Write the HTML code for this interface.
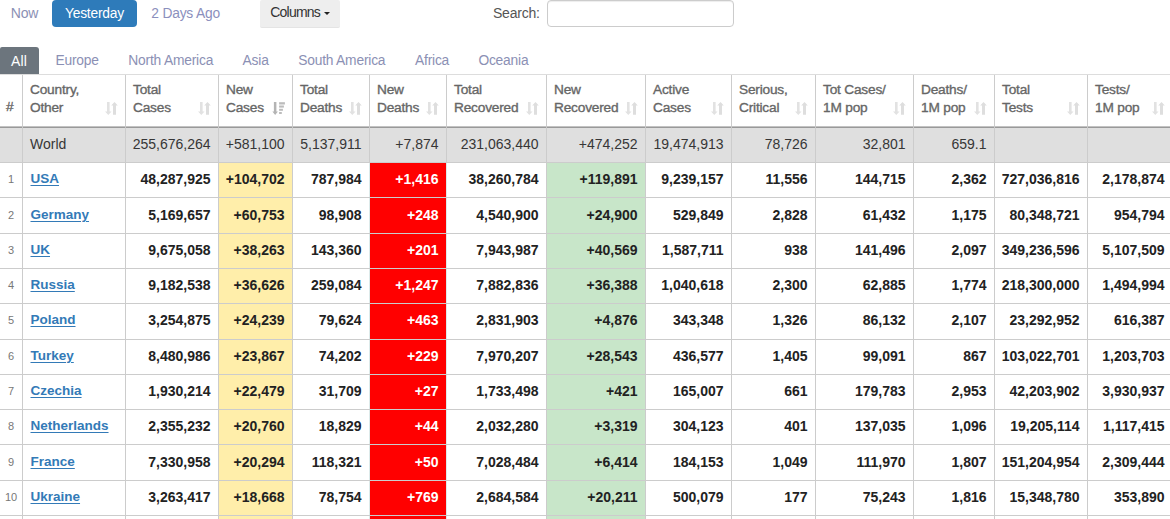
<!DOCTYPE html>
<html><head><meta charset="utf-8"><title>COVID table</title>
<style>
*{margin:0;padding:0;box-sizing:border-box}
html,body{width:1170px;height:519px;overflow:hidden;background:#fff}
body{position:relative;font-family:"Liberation Sans",sans-serif;color:#333}
.a{position:absolute;white-space:nowrap}
.t{position:absolute;white-space:nowrap;line-height:20px;height:20px}
.bg{position:absolute}
.hl{position:absolute;height:1px}
.vl{position:absolute;width:1px}
.hd{position:absolute;font-weight:normal;color:#666;-webkit-text-stroke:0.35px #666;font-size:13.7px;letter-spacing:-0.2px;line-height:18px;white-space:nowrap}
.num{position:absolute;text-align:right;font-weight:bold;font-size:14px;color:#222;line-height:20px;white-space:nowrap}
.wn{position:absolute;text-align:right;font-size:14px;color:#363636;line-height:20px;white-space:nowrap}
.cn{position:absolute;font-weight:bold;font-size:13.5px;color:#337ab7;text-decoration:underline;text-underline-offset:2px;line-height:20px;white-space:nowrap}
.rk{position:absolute;text-align:center;font-size:11px;color:#777;line-height:20px;white-space:nowrap}
.tab{position:absolute;font-size:13.8px;letter-spacing:-0.2px;color:#8b90b4;line-height:20px;white-space:nowrap}
.si{position:absolute}
</style></head><body>

<div class="a" style="left:10.8px;top:2.6px;font-size:14px;letter-spacing:-0.25px;line-height:20px;color:#8b90b4">Now</div>
<div class="a" style="left:52px;top:0;width:85px;height:27px;background:#2e7bba;border-radius:4px"></div>
<div class="a" style="left:65px;top:4px;font-size:13.8px;letter-spacing:-0.22px;line-height:20px;color:#fff">Yesterday</div>
<div class="a" style="left:151.3px;top:4px;font-size:13.8px;letter-spacing:-0.2px;line-height:20px;color:#8b8fbd">2 Days Ago</div>
<div class="a" style="left:260px;top:0;width:80px;height:28px;background:#eee;border-bottom:1px solid #e4e4e4;border-radius:2px"></div>
<div class="a" style="left:270.3px;top:2px;font-size:14px;letter-spacing:-0.8px;line-height:20px;color:#333">Columns</div>
<div class="a" style="left:323.6px;top:12px;width:0;height:0;border-left:3.4px solid transparent;border-right:3.4px solid transparent;border-top:3.5px solid #222"></div>
<div class="a" style="left:493px;top:2.5px;font-size:14px;letter-spacing:-0.22px;line-height:20px;color:#555">Search:</div>
<div class="a" style="left:547px;top:0;width:187px;height:27px;border:1px solid #ccc;border-radius:4px;box-shadow:inset 0 1px 1px rgba(0,0,0,.075)"></div>
<div class="a" style="left:0;top:47px;width:39px;height:27px;background:#6c757d;border-radius:2px 3px 0 0"></div>
<div class="tab" style="left:11px;top:51px;color:#fff;font-size:14px;letter-spacing:0.2px">All</div>
<div class="tab" style="left:55.5px;top:50.5px">Europe</div>
<div class="tab" style="left:128.3px;top:50.5px">North America</div>
<div class="tab" style="left:242.6px;top:50.5px">Asia</div>
<div class="tab" style="left:298.2px;top:50.5px">South America</div>
<div class="tab" style="left:415px;top:50.5px">Africa</div>
<div class="tab" style="left:478.4px;top:50.5px">Oceania</div>
<div class="bg" style="left:0;top:128px;width:1170px;height:34px;background:#dfdfdf"></div>
<div class="bg" style="left:219px;top:163px;width:73px;height:356px;background:#ffeeaa"></div>
<div class="bg" style="left:370px;top:163px;width:76px;height:356px;background:#ff0000"></div>
<div class="bg" style="left:547px;top:163px;width:98px;height:356px;background:#c8e6c9"></div>
<div class="vl" style="left:22px;top:75px;height:444px;background:#ccc"></div>
<div class="vl" style="left:125px;top:75px;height:444px;background:#ccc"></div>
<div class="vl" style="left:218px;top:75px;height:444px;background:#ccc"></div>
<div class="vl" style="left:292px;top:75px;height:444px;background:#ccc"></div>
<div class="vl" style="left:369px;top:75px;height:51px;background:#ccc"></div>
<div class="vl" style="left:369px;top:128px;height:34px;background:#ccc"></div>
<div class="vl" style="left:369px;top:163px;height:356px;background:#dceaea"></div>
<div class="vl" style="left:446px;top:75px;height:51px;background:#ccc"></div>
<div class="vl" style="left:446px;top:128px;height:34px;background:#ccc"></div>
<div class="vl" style="left:446px;top:163px;height:356px;background:#dceaea"></div>
<div class="vl" style="left:546px;top:75px;height:444px;background:#ccc"></div>
<div class="vl" style="left:645px;top:75px;height:444px;background:#ccc"></div>
<div class="vl" style="left:731px;top:75px;height:444px;background:#ccc"></div>
<div class="vl" style="left:815px;top:75px;height:444px;background:#ccc"></div>
<div class="vl" style="left:913px;top:75px;height:444px;background:#ccc"></div>
<div class="vl" style="left:994px;top:75px;height:444px;background:#ccc"></div>
<div class="vl" style="left:1087px;top:75px;height:444px;background:#ccc"></div>
<div class="hl" style="left:0;top:74px;width:1170px;background:#ddd"></div>
<div class="hl" style="left:0;top:126px;width:1170px;background:#c2c2c2"></div>
<div class="hl" style="left:0;top:127px;width:1170px;background:#999"></div>
<div class="hl" style="left:0;top:162px;width:1170px;background:#ccc"></div>
<div class="hl" style="left:0;top:197px;width:1170px;background:#ccc"></div>
<div class="hl" style="left:0;top:233px;width:1170px;background:#ccc"></div>
<div class="hl" style="left:0;top:268px;width:1170px;background:#ccc"></div>
<div class="hl" style="left:0;top:303px;width:1170px;background:#ccc"></div>
<div class="hl" style="left:0;top:339px;width:1170px;background:#ccc"></div>
<div class="hl" style="left:0;top:374px;width:1170px;background:#ccc"></div>
<div class="hl" style="left:0;top:409px;width:1170px;background:#ccc"></div>
<div class="hl" style="left:0;top:444px;width:1170px;background:#ccc"></div>
<div class="hl" style="left:0;top:480px;width:1170px;background:#ccc"></div>
<div class="hl" style="left:0;top:515px;width:1170px;background:#ccc"></div>
<div class="vl" style="left:22px;top:126px;height:2px;background:#c8c8c8"></div>
<div class="vl" style="left:125px;top:126px;height:2px;background:#c8c8c8"></div>
<div class="vl" style="left:218px;top:126px;height:2px;background:#c8c8c8"></div>
<div class="vl" style="left:292px;top:126px;height:2px;background:#c8c8c8"></div>
<div class="vl" style="left:369px;top:126px;height:2px;background:#c8c8c8"></div>
<div class="vl" style="left:446px;top:126px;height:2px;background:#c8c8c8"></div>
<div class="vl" style="left:546px;top:126px;height:2px;background:#c8c8c8"></div>
<div class="vl" style="left:645px;top:126px;height:2px;background:#c8c8c8"></div>
<div class="vl" style="left:731px;top:126px;height:2px;background:#c8c8c8"></div>
<div class="vl" style="left:815px;top:126px;height:2px;background:#c8c8c8"></div>
<div class="vl" style="left:913px;top:126px;height:2px;background:#c8c8c8"></div>
<div class="vl" style="left:994px;top:126px;height:2px;background:#c8c8c8"></div>
<div class="vl" style="left:1087px;top:126px;height:2px;background:#c8c8c8"></div>
<div class="hd" style="left:6px;top:98.3px;font-size:13.7px;letter-spacing:0">#</div>
<div class="hd" style="left:30px;top:80.5px">Country,<br>Other</div>
<svg class="si" style="left:105px;top:101px" width="14" height="15" viewBox="0 0 14 15"><path d="M2 1H4.6V10.4H6.5L3.3 14 0 10.4H2Z" fill="#e2e2e2"/><path d="M8 13.8H11V4.6H12.8L9.5 1 6.2 4.6H8Z" fill="#dedede"/></svg>
<div class="hd" style="left:133px;top:80.5px">Total<br>Cases</div>
<svg class="si" style="left:198px;top:101px" width="14" height="15" viewBox="0 0 14 15"><path d="M2 1H4.6V10.4H6.5L3.3 14 0 10.4H2Z" fill="#e2e2e2"/><path d="M8 13.8H11V4.6H12.8L9.5 1 6.2 4.6H8Z" fill="#dedede"/></svg>
<div class="hd" style="left:226px;top:80.5px">New<br>Cases</div>
<svg class="si" style="left:272px;top:101px" width="14" height="15" viewBox="0 0 14 15"><path d="M1.9 1H4.4V10.4H5.9L3.15 13.9 0.4 10.4H1.9Z" fill="#b4b4b4"/><rect x="7.1" y="1.2" width="5.8" height="2.3" fill="#bcbcbc"/><rect x="7.1" y="4.5" width="4.8" height="2.1" fill="#bcbcbc"/><rect x="7.1" y="7.8" width="3.8" height="2" fill="#bcbcbc"/><rect x="7.1" y="11" width="2.7" height="2" fill="#bcbcbc"/></svg>
<div class="hd" style="left:300px;top:80.5px">Total<br>Deaths</div>
<svg class="si" style="left:349px;top:101px" width="14" height="15" viewBox="0 0 14 15"><path d="M2 1H4.6V10.4H6.5L3.3 14 0 10.4H2Z" fill="#e2e2e2"/><path d="M8 13.8H11V4.6H12.8L9.5 1 6.2 4.6H8Z" fill="#dedede"/></svg>
<div class="hd" style="left:377px;top:80.5px">New<br>Deaths</div>
<svg class="si" style="left:426px;top:101px" width="14" height="15" viewBox="0 0 14 15"><path d="M2 1H4.6V10.4H6.5L3.3 14 0 10.4H2Z" fill="#e2e2e2"/><path d="M8 13.8H11V4.6H12.8L9.5 1 6.2 4.6H8Z" fill="#dedede"/></svg>
<div class="hd" style="left:454px;top:80.5px">Total<br>Recovered</div>
<svg class="si" style="left:526px;top:101px" width="14" height="15" viewBox="0 0 14 15"><path d="M2 1H4.6V10.4H6.5L3.3 14 0 10.4H2Z" fill="#e2e2e2"/><path d="M8 13.8H11V4.6H12.8L9.5 1 6.2 4.6H8Z" fill="#dedede"/></svg>
<div class="hd" style="left:554px;top:80.5px">New<br>Recovered</div>
<svg class="si" style="left:625px;top:101px" width="14" height="15" viewBox="0 0 14 15"><path d="M2 1H4.6V10.4H6.5L3.3 14 0 10.4H2Z" fill="#e2e2e2"/><path d="M8 13.8H11V4.6H12.8L9.5 1 6.2 4.6H8Z" fill="#dedede"/></svg>
<div class="hd" style="left:653px;top:80.5px">Active<br>Cases</div>
<svg class="si" style="left:711px;top:101px" width="14" height="15" viewBox="0 0 14 15"><path d="M2 1H4.6V10.4H6.5L3.3 14 0 10.4H2Z" fill="#e2e2e2"/><path d="M8 13.8H11V4.6H12.8L9.5 1 6.2 4.6H8Z" fill="#dedede"/></svg>
<div class="hd" style="left:739px;top:80.5px">Serious,<br>Critical</div>
<svg class="si" style="left:795px;top:101px" width="14" height="15" viewBox="0 0 14 15"><path d="M2 1H4.6V10.4H6.5L3.3 14 0 10.4H2Z" fill="#e2e2e2"/><path d="M8 13.8H11V4.6H12.8L9.5 1 6.2 4.6H8Z" fill="#dedede"/></svg>
<div class="hd" style="left:823px;top:80.5px">Tot Cases/<br>1M pop</div>
<svg class="si" style="left:893px;top:101px" width="14" height="15" viewBox="0 0 14 15"><path d="M2 1H4.6V10.4H6.5L3.3 14 0 10.4H2Z" fill="#e2e2e2"/><path d="M8 13.8H11V4.6H12.8L9.5 1 6.2 4.6H8Z" fill="#dedede"/></svg>
<div class="hd" style="left:921px;top:80.5px">Deaths/<br>1M pop</div>
<svg class="si" style="left:974px;top:101px" width="14" height="15" viewBox="0 0 14 15"><path d="M2 1H4.6V10.4H6.5L3.3 14 0 10.4H2Z" fill="#e2e2e2"/><path d="M8 13.8H11V4.6H12.8L9.5 1 6.2 4.6H8Z" fill="#dedede"/></svg>
<div class="hd" style="left:1002px;top:80.5px">Total<br>Tests</div>
<svg class="si" style="left:1067px;top:101px" width="14" height="15" viewBox="0 0 14 15"><path d="M2 1H4.6V10.4H6.5L3.3 14 0 10.4H2Z" fill="#e2e2e2"/><path d="M8 13.8H11V4.6H12.8L9.5 1 6.2 4.6H8Z" fill="#dedede"/></svg>
<div class="hd" style="left:1095px;top:80.5px">Tests/<br>1M pop</div>
<svg class="si" style="left:1152px;top:101px" width="14" height="15" viewBox="0 0 14 15"><path d="M2 1H4.6V10.4H6.5L3.3 14 0 10.4H2Z" fill="#e2e2e2"/><path d="M8 13.8H11V4.6H12.8L9.5 1 6.2 4.6H8Z" fill="#dedede"/></svg>
<div class="wn" style="left:30px;top:134px;text-align:left">World</div>
<div class="wn" style="left:125px;top:134px;width:85.5px">255,676,264</div>
<div class="wn" style="left:218px;top:134px;width:66.5px">+581,100</div>
<div class="wn" style="left:292px;top:134px;width:69.5px">5,137,911</div>
<div class="wn" style="left:369px;top:134px;width:69.5px">+7,874</div>
<div class="wn" style="left:446px;top:134px;width:92.5px">231,063,440</div>
<div class="wn" style="left:546px;top:134px;width:91.5px">+474,252</div>
<div class="wn" style="left:645px;top:134px;width:78.5px">19,474,913</div>
<div class="wn" style="left:731px;top:134px;width:76.5px">78,726</div>
<div class="wn" style="left:815px;top:134px;width:90.5px">32,801</div>
<div class="wn" style="left:913px;top:134px;width:73.5px">659.1</div>
<div class="rk" style="left:0;top:168.5px;width:22px">1</div>
<div class="cn" style="left:30.5px;top:169px">USA</div>
<div class="num" style="left:125px;top:169px;width:85.5px;color:#222">48,287,925</div>
<div class="num" style="left:218px;top:169px;width:66.5px;color:#222">+104,702</div>
<div class="num" style="left:292px;top:169px;width:69.5px;color:#222">787,984</div>
<div class="num" style="left:369px;top:169px;width:69.5px;color:#fff">+1,416</div>
<div class="num" style="left:446px;top:169px;width:92.5px;color:#222">38,260,784</div>
<div class="num" style="left:546px;top:169px;width:91.5px;color:#222">+119,891</div>
<div class="num" style="left:645px;top:169px;width:78.5px;color:#222">9,239,157</div>
<div class="num" style="left:731px;top:169px;width:76.5px;color:#222">11,556</div>
<div class="num" style="left:815px;top:169px;width:90.5px;color:#222">144,715</div>
<div class="num" style="left:913px;top:169px;width:73.5px;color:#222">2,362</div>
<div class="num" style="left:994px;top:169px;width:85.5px;color:#222">727,036,816</div>
<div class="num" style="left:1087px;top:169px;width:77.5px;color:#222">2,178,874</div>
<div class="rk" style="left:0;top:204.5px;width:22px">2</div>
<div class="cn" style="left:30.5px;top:205px">Germany</div>
<div class="num" style="left:125px;top:205px;width:85.5px;color:#222">5,169,657</div>
<div class="num" style="left:218px;top:205px;width:66.5px;color:#222">+60,753</div>
<div class="num" style="left:292px;top:205px;width:69.5px;color:#222">98,908</div>
<div class="num" style="left:369px;top:205px;width:69.5px;color:#fff">+248</div>
<div class="num" style="left:446px;top:205px;width:92.5px;color:#222">4,540,900</div>
<div class="num" style="left:546px;top:205px;width:91.5px;color:#222">+24,900</div>
<div class="num" style="left:645px;top:205px;width:78.5px;color:#222">529,849</div>
<div class="num" style="left:731px;top:205px;width:76.5px;color:#222">2,828</div>
<div class="num" style="left:815px;top:205px;width:90.5px;color:#222">61,432</div>
<div class="num" style="left:913px;top:205px;width:73.5px;color:#222">1,175</div>
<div class="num" style="left:994px;top:205px;width:85.5px;color:#222">80,348,721</div>
<div class="num" style="left:1087px;top:205px;width:77.5px;color:#222">954,794</div>
<div class="rk" style="left:0;top:239.5px;width:22px">3</div>
<div class="cn" style="left:30.5px;top:240px">UK</div>
<div class="num" style="left:125px;top:240px;width:85.5px;color:#222">9,675,058</div>
<div class="num" style="left:218px;top:240px;width:66.5px;color:#222">+38,263</div>
<div class="num" style="left:292px;top:240px;width:69.5px;color:#222">143,360</div>
<div class="num" style="left:369px;top:240px;width:69.5px;color:#fff">+201</div>
<div class="num" style="left:446px;top:240px;width:92.5px;color:#222">7,943,987</div>
<div class="num" style="left:546px;top:240px;width:91.5px;color:#222">+40,569</div>
<div class="num" style="left:645px;top:240px;width:78.5px;color:#222">1,587,711</div>
<div class="num" style="left:731px;top:240px;width:76.5px;color:#222">938</div>
<div class="num" style="left:815px;top:240px;width:90.5px;color:#222">141,496</div>
<div class="num" style="left:913px;top:240px;width:73.5px;color:#222">2,097</div>
<div class="num" style="left:994px;top:240px;width:85.5px;color:#222">349,236,596</div>
<div class="num" style="left:1087px;top:240px;width:77.5px;color:#222">5,107,509</div>
<div class="rk" style="left:0;top:274.5px;width:22px">4</div>
<div class="cn" style="left:30.5px;top:275px">Russia</div>
<div class="num" style="left:125px;top:275px;width:85.5px;color:#222">9,182,538</div>
<div class="num" style="left:218px;top:275px;width:66.5px;color:#222">+36,626</div>
<div class="num" style="left:292px;top:275px;width:69.5px;color:#222">259,084</div>
<div class="num" style="left:369px;top:275px;width:69.5px;color:#fff">+1,247</div>
<div class="num" style="left:446px;top:275px;width:92.5px;color:#222">7,882,836</div>
<div class="num" style="left:546px;top:275px;width:91.5px;color:#222">+36,388</div>
<div class="num" style="left:645px;top:275px;width:78.5px;color:#222">1,040,618</div>
<div class="num" style="left:731px;top:275px;width:76.5px;color:#222">2,300</div>
<div class="num" style="left:815px;top:275px;width:90.5px;color:#222">62,885</div>
<div class="num" style="left:913px;top:275px;width:73.5px;color:#222">1,774</div>
<div class="num" style="left:994px;top:275px;width:85.5px;color:#222">218,300,000</div>
<div class="num" style="left:1087px;top:275px;width:77.5px;color:#222">1,494,994</div>
<div class="rk" style="left:0;top:309.5px;width:22px">5</div>
<div class="cn" style="left:30.5px;top:310px">Poland</div>
<div class="num" style="left:125px;top:310px;width:85.5px;color:#222">3,254,875</div>
<div class="num" style="left:218px;top:310px;width:66.5px;color:#222">+24,239</div>
<div class="num" style="left:292px;top:310px;width:69.5px;color:#222">79,624</div>
<div class="num" style="left:369px;top:310px;width:69.5px;color:#fff">+463</div>
<div class="num" style="left:446px;top:310px;width:92.5px;color:#222">2,831,903</div>
<div class="num" style="left:546px;top:310px;width:91.5px;color:#222">+4,876</div>
<div class="num" style="left:645px;top:310px;width:78.5px;color:#222">343,348</div>
<div class="num" style="left:731px;top:310px;width:76.5px;color:#222">1,326</div>
<div class="num" style="left:815px;top:310px;width:90.5px;color:#222">86,132</div>
<div class="num" style="left:913px;top:310px;width:73.5px;color:#222">2,107</div>
<div class="num" style="left:994px;top:310px;width:85.5px;color:#222">23,292,952</div>
<div class="num" style="left:1087px;top:310px;width:77.5px;color:#222">616,387</div>
<div class="rk" style="left:0;top:345.5px;width:22px">6</div>
<div class="cn" style="left:30.5px;top:346px">Turkey</div>
<div class="num" style="left:125px;top:346px;width:85.5px;color:#222">8,480,986</div>
<div class="num" style="left:218px;top:346px;width:66.5px;color:#222">+23,867</div>
<div class="num" style="left:292px;top:346px;width:69.5px;color:#222">74,202</div>
<div class="num" style="left:369px;top:346px;width:69.5px;color:#fff">+229</div>
<div class="num" style="left:446px;top:346px;width:92.5px;color:#222">7,970,207</div>
<div class="num" style="left:546px;top:346px;width:91.5px;color:#222">+28,543</div>
<div class="num" style="left:645px;top:346px;width:78.5px;color:#222">436,577</div>
<div class="num" style="left:731px;top:346px;width:76.5px;color:#222">1,405</div>
<div class="num" style="left:815px;top:346px;width:90.5px;color:#222">99,091</div>
<div class="num" style="left:913px;top:346px;width:73.5px;color:#222">867</div>
<div class="num" style="left:994px;top:346px;width:85.5px;color:#222">103,022,701</div>
<div class="num" style="left:1087px;top:346px;width:77.5px;color:#222">1,203,703</div>
<div class="rk" style="left:0;top:380.5px;width:22px">7</div>
<div class="cn" style="left:30.5px;top:381px">Czechia</div>
<div class="num" style="left:125px;top:381px;width:85.5px;color:#222">1,930,214</div>
<div class="num" style="left:218px;top:381px;width:66.5px;color:#222">+22,479</div>
<div class="num" style="left:292px;top:381px;width:69.5px;color:#222">31,709</div>
<div class="num" style="left:369px;top:381px;width:69.5px;color:#fff">+27</div>
<div class="num" style="left:446px;top:381px;width:92.5px;color:#222">1,733,498</div>
<div class="num" style="left:546px;top:381px;width:91.5px;color:#222">+421</div>
<div class="num" style="left:645px;top:381px;width:78.5px;color:#222">165,007</div>
<div class="num" style="left:731px;top:381px;width:76.5px;color:#222">661</div>
<div class="num" style="left:815px;top:381px;width:90.5px;color:#222">179,783</div>
<div class="num" style="left:913px;top:381px;width:73.5px;color:#222">2,953</div>
<div class="num" style="left:994px;top:381px;width:85.5px;color:#222">42,203,902</div>
<div class="num" style="left:1087px;top:381px;width:77.5px;color:#222">3,930,937</div>
<div class="rk" style="left:0;top:415.5px;width:22px">8</div>
<div class="cn" style="left:30.5px;top:416px">Netherlands</div>
<div class="num" style="left:125px;top:416px;width:85.5px;color:#222">2,355,232</div>
<div class="num" style="left:218px;top:416px;width:66.5px;color:#222">+20,760</div>
<div class="num" style="left:292px;top:416px;width:69.5px;color:#222">18,829</div>
<div class="num" style="left:369px;top:416px;width:69.5px;color:#fff">+44</div>
<div class="num" style="left:446px;top:416px;width:92.5px;color:#222">2,032,280</div>
<div class="num" style="left:546px;top:416px;width:91.5px;color:#222">+3,319</div>
<div class="num" style="left:645px;top:416px;width:78.5px;color:#222">304,123</div>
<div class="num" style="left:731px;top:416px;width:76.5px;color:#222">401</div>
<div class="num" style="left:815px;top:416px;width:90.5px;color:#222">137,035</div>
<div class="num" style="left:913px;top:416px;width:73.5px;color:#222">1,096</div>
<div class="num" style="left:994px;top:416px;width:85.5px;color:#222">19,205,114</div>
<div class="num" style="left:1087px;top:416px;width:77.5px;color:#222">1,117,415</div>
<div class="rk" style="left:0;top:451.5px;width:22px">9</div>
<div class="cn" style="left:30.5px;top:452px">France</div>
<div class="num" style="left:125px;top:452px;width:85.5px;color:#222">7,330,958</div>
<div class="num" style="left:218px;top:452px;width:66.5px;color:#222">+20,294</div>
<div class="num" style="left:292px;top:452px;width:69.5px;color:#222">118,321</div>
<div class="num" style="left:369px;top:452px;width:69.5px;color:#fff">+50</div>
<div class="num" style="left:446px;top:452px;width:92.5px;color:#222">7,028,484</div>
<div class="num" style="left:546px;top:452px;width:91.5px;color:#222">+6,414</div>
<div class="num" style="left:645px;top:452px;width:78.5px;color:#222">184,153</div>
<div class="num" style="left:731px;top:452px;width:76.5px;color:#222">1,049</div>
<div class="num" style="left:815px;top:452px;width:90.5px;color:#222">111,970</div>
<div class="num" style="left:913px;top:452px;width:73.5px;color:#222">1,807</div>
<div class="num" style="left:994px;top:452px;width:85.5px;color:#222">151,204,954</div>
<div class="num" style="left:1087px;top:452px;width:77.5px;color:#222">2,309,444</div>
<div class="rk" style="left:0;top:486.5px;width:22px">10</div>
<div class="cn" style="left:30.5px;top:487px">Ukraine</div>
<div class="num" style="left:125px;top:487px;width:85.5px;color:#222">3,263,417</div>
<div class="num" style="left:218px;top:487px;width:66.5px;color:#222">+18,668</div>
<div class="num" style="left:292px;top:487px;width:69.5px;color:#222">78,754</div>
<div class="num" style="left:369px;top:487px;width:69.5px;color:#fff">+769</div>
<div class="num" style="left:446px;top:487px;width:92.5px;color:#222">2,684,584</div>
<div class="num" style="left:546px;top:487px;width:91.5px;color:#222">+20,211</div>
<div class="num" style="left:645px;top:487px;width:78.5px;color:#222">500,079</div>
<div class="num" style="left:731px;top:487px;width:76.5px;color:#222">177</div>
<div class="num" style="left:815px;top:487px;width:90.5px;color:#222">75,243</div>
<div class="num" style="left:913px;top:487px;width:73.5px;color:#222">1,816</div>
<div class="num" style="left:994px;top:487px;width:85.5px;color:#222">15,348,780</div>
<div class="num" style="left:1087px;top:487px;width:77.5px;color:#222">353,890</div>
<div class="rk" style="left:0;top:521.5px;width:22px"></div>
</body></html>
